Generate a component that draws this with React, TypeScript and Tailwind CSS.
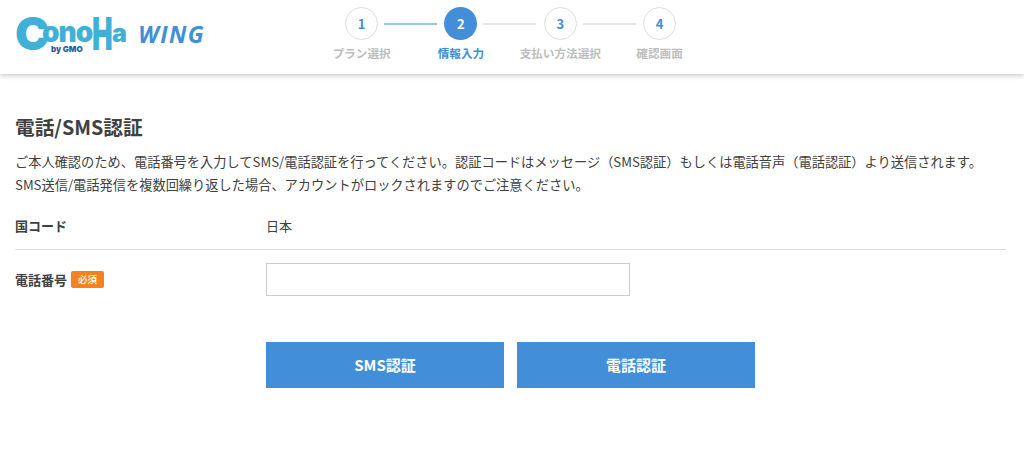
const font = "[font-family:'Noto_Sans_CJK_JP','Noto_Sans',sans-serif]";

const steps = [
  { num: '1', label: 'プラン選択' },
  { num: '2', label: '情報入力', active: true },
  { num: '3', label: '支払い方法選択' },
  { num: '4', label: '確認画面' },
];

function Logo() {
  return (
    <div className="flex items-center w-[190px]">
      <div className="relative h-[40px] w-[112px] text-[#3fb0d8] font-black font-['Inter',sans-serif] leading-none">
        <span className="absolute left-0 top-[-3px] text-[46px]">C</span>
        <span className="absolute left-[27px] top-[5px] text-[28px] tracking-[-1px]">ono</span>
        <span className="absolute left-[77px] top-[-3px] text-[46px] origin-left scale-x-[0.6]">H</span>
        <span className="absolute left-[97px] top-[8px] text-[25px]">a</span>
        <span className="absolute left-[36px] top-[32px] text-[8px] text-[#2f5f9e] whitespace-nowrap">by GMO</span>
      </div>
      <span className="ml-[12px] mt-[2px] text-[23px] font-bold italic tracking-[1.4px] text-[#428ed9] font-['Open_Sans',sans-serif] leading-none">WING</span>
    </div>
  );
}

function Stepper() {
  return (
    <div className="flex items-start">
      {steps.map((step, i) => (
        <div key={step.num} className="relative w-[99.3px] flex flex-col items-center">
          <div
            className={`w-[33px] h-[33px] rounded-full flex items-center justify-center text-[13px] font-bold ${
              step.active ? 'bg-[#428ed9] text-white' : 'bg-white border border-[#dddddd] text-[#428ed9]'
            }`}
          >
            {step.num}
          </div>
          {i < 3 && (
            <div className={`absolute left-[72px] top-[16px] h-[2px] w-[53px] ${i === 0 ? 'bg-[#9cc4ec]' : 'bg-[#e5e5e5]'}`} />
          )}
          <span className={`mt-[4px] text-[11.6px] font-bold whitespace-nowrap leading-[18px] ${step.active ? 'text-[#428ed9]' : 'text-[#bdbdbd]'}`}>
            {step.label}
          </span>
        </div>
      ))}
    </div>
  );
}

export default function App() {
  return (
    <div className={`${font} w-[1024px] h-[452px] bg-white text-[#404040] overflow-hidden`}>
      {/* Header */}
      <header className="h-[74px] bg-white shadow-[0_2px_5px_rgba(0,0,0,0.2)] pl-[15px] flex items-start">
        <div className="mt-[13px]">
          <Logo />
        </div>
        <div className="ml-[107px] pt-[7px]">
          <Stepper />
        </div>
      </header>

      <main className="px-[15px] pt-[39px] w-[1021px]">
        <h2 className="text-[19.7px] font-bold leading-[28px] text-[#404040]">電話/SMS認証</h2>
        <p className="mt-[9px] text-[13.22px] leading-[23px] whitespace-nowrap">
          ご本人確認のため、電話番号を入力してSMS/電話認証を行ってください。認証コードはメッセージ（SMS認証）もしくは電話音声（電話認証）より送信されます。
          <br />
          SMS送信/電話発信を複数回繰り返した場合、アカウントがロックされますのでご注意ください。
        </p>

        {/* Country row */}
        <div className="mt-[8px] h-[46px] flex items-center border-b border-[#dddddd] pb-[1px] text-[13px]">
          <span className="w-[251px] font-bold">国コード</span>
          <span>日本</span>
        </div>

        {/* Phone row */}
        <div className="mt-[13px] flex items-center text-[13px]">
          <div className="w-[251px] flex items-center gap-[4px]">
            <span className="font-bold">電話番号</span>
            <span className="rounded-[2px] bg-[#f58220] text-white text-[9.5px] font-medium leading-[17px] px-[7px]">必須</span>
          </div>
          <input className="w-[364px] h-[33px] bg-white border border-[#cccccc] outline-none" />
        </div>

        {/* Buttons */}
        <div className="mt-[46px] ml-[251px] flex gap-[13px]">
          <button className="w-[238px] h-[46px] bg-[#428ed9] text-white text-[15px] font-bold">SMS認証</button>
          <button className="w-[238px] h-[46px] bg-[#428ed9] text-white text-[15px] font-bold">電話認証</button>
        </div>
      </main>
    </div>
  );
}
